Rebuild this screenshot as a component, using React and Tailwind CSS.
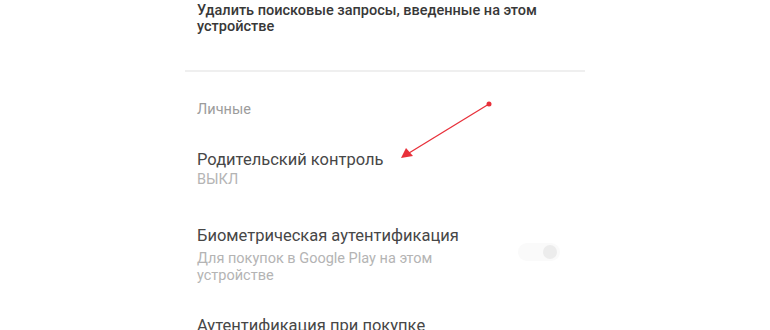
export default function App() {
  return (
    <div className="relative w-[770px] h-[330px] overflow-hidden bg-white" style={{ fontFamily: "Roboto, 'Noto Sans', sans-serif" }}>
      <div className="ml-[185px] w-[400px]">
        <div className="px-3 pt-[3px] pb-[35px] text-[14.5px] leading-[16px] font-medium text-[#383838]">
          <div>Удалить поисковые запросы, введенные на этом</div>
          <div>устройстве</div>
        </div>
        <div className="h-[2px] bg-[#efefef]" />
        <div className="px-3 pt-[30px] text-[14.5px] leading-[16px] text-[#9c9c9c]">Личные</div>
        <div className="px-3 pt-[31px] text-[16.5px] leading-[22px] text-[#474747]">Родительский контроль</div>
        <div className="px-3 text-[14.5px] leading-[18px] text-[#b4b4b4]">ВЫКЛ</div>
        <div className="flex items-start pt-[36px] pr-[25px]">
          <div className="flex-1 px-3">
            <div className="text-[16.5px] leading-[22px] text-[#474747]">Биометрическая аутентификация</div>
            <div className="mt-[3px] w-[280px] text-[14.5px] leading-[17px] text-[#b4b4b4]">Для покупок в Google Play на этом устройстве</div>
          </div>
          <div className="mt-[18px] relative w-[42px] h-[18px] rounded-full bg-[#fafafa]">
            <div className="absolute right-[3px] top-[2px] w-[14px] h-[14px] rounded-full bg-[#ececec]" />
          </div>
        </div>
        <div className="px-3 pt-[31px] text-[16.5px] leading-[22px] text-[#474747]">Аутентификация при покупке</div>
      </div>
      <svg className="absolute left-0 top-0" width="770" height="330">
        <line x1="489" y1="104" x2="409" y2="153" stroke="#e8303a" strokeWidth="1.3" />
        <circle cx="489" cy="104" r="2.5" fill="#e8303a" />
        <polygon points="401,158 406,148 413,156" fill="#e8303a" />
      </svg>
    </div>
  );
}
